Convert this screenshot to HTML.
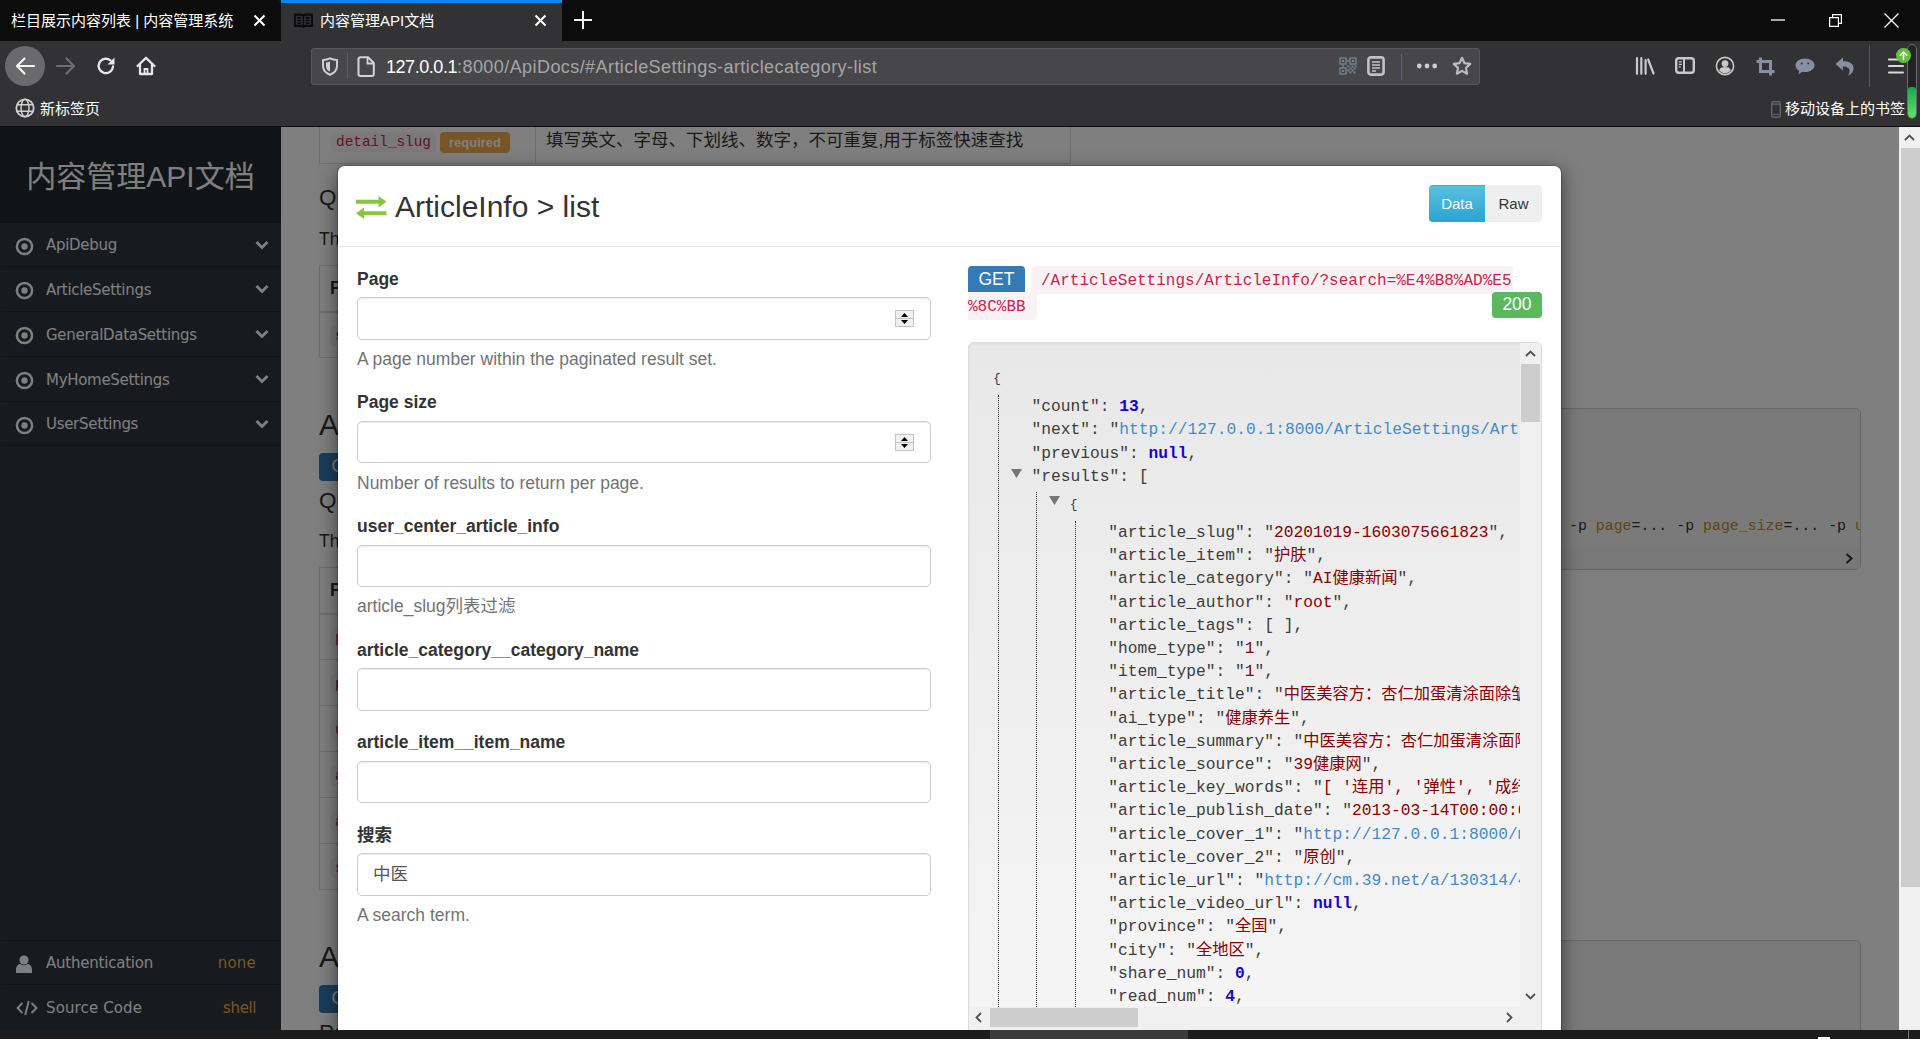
<!DOCTYPE html>
<html lang="zh-CN">
<head>
<meta charset="utf-8">
<title>内容管理API文档</title>
<style>
*{box-sizing:border-box;margin:0;padding:0}
html,body{width:1920px;height:1039px;overflow:hidden;background:#808080}
body{position:relative;font-family:"Liberation Sans","Noto Sans CJK SC",sans-serif;font-size:17.5px;color:#333;line-height:1.428571}
.abs{position:absolute}
svg{display:block;overflow:visible}
/* ---------- browser chrome ---------- */
#tabbar{position:absolute;left:0;top:0;width:1920px;height:41px;background:#0c0c0d}
#navbar{position:absolute;left:0;top:41px;width:1920px;height:85px;background:#323234}
#chromeline{position:absolute;left:0;top:126px;width:1920px;height:1px;background:#0c0c0d}
.tab{position:absolute;top:0;height:41px;color:#fff;font-size:15px;line-height:41px;white-space:nowrap;font-family:"Liberation Sans","Noto Sans CJK SC",sans-serif}
#tab2{left:281px;width:281px;background:#323234;border-top:3px solid #0a84ff;line-height:35px}
#urlbar{position:absolute;left:311px;top:48px;width:1169px;height:37px;background:#474749;border:1px solid #58585a;border-radius:3px}
#urltext{position:absolute;left:386px;top:54px;font-size:18px;line-height:26px;color:#a5a5a6;white-space:nowrap;letter-spacing:.43px}
#urltext b{font-weight:normal;color:#fff;letter-spacing:-.45px}
.bm{position:absolute;top:98px;font-size:15px;line-height:22px;color:#fff;white-space:nowrap}
/* ---------- page ---------- */
#page{position:absolute;left:0;top:127px;width:1920px;height:903px;overflow:hidden;background:#808080}

/* sidebar */
#sidebar{position:absolute;left:0;top:0;width:281px;height:903px;background:#2e353d;font-family:"DejaVu Sans","Noto Sans CJK SC",sans-serif;font-size:15px;color:#fff}
#brand{position:absolute;left:0;top:0;width:281px;height:96px;background:#23282e;text-align:center;font-family:"Liberation Sans","Noto Sans CJK SC",sans-serif;font-size:30px;line-height:33px;padding-top:33px;color:#fff;white-space:nowrap}
.mi{position:absolute;left:0;width:281px;height:45px;border-bottom:1px solid #23282e;border-left:4px solid #2e353d;line-height:44px;white-space:nowrap}
.mi span.t{position:absolute;left:42px;top:1px;letter-spacing:-0.3px}
.mi span.r{position:absolute;right:25px;top:1px;color:#f0ad4e}
.mi svg{position:absolute}

/* main content behind the modal */
#main{position:absolute;left:281px;top:0;width:1618px;height:903px;background:#fff;overflow:hidden}
#main .h3{position:absolute;left:38px;font-size:30px;line-height:33px;color:#333;white-space:nowrap}
#main .h4{position:absolute;left:38px;font-size:22.5px;line-height:25px;color:#333;white-space:nowrap}
#main .p{position:absolute;left:38px;font-size:17.5px;line-height:25px;white-space:nowrap}
#main .get{position:absolute;left:38px;width:62px;margin-top:-1px;height:28px;border-radius:4px;background:#337ab7;color:#fff;font-size:18px;line-height:27px;text-align:center}
table.t{position:absolute;left:38px;width:752px;border-collapse:collapse;font-size:17.5px}
table.t td,table.t th{border:1px solid #ddd;height:46px;padding:0 10px;text-align:left;vertical-align:middle;white-space:nowrap}
table.t th{font-weight:bold;border-bottom-width:2px}
table.t td:first-child,table.t th:first-child{width:216px}
code{font-family:"Liberation Mono",monospace;font-size:14.400px;color:#c7254e;background:#f9f2f4;border-radius:5px;padding:2px 5px}
.req{position:relative;top:2px;display:inline-block;background:#f0ad4e;color:#fff;font-weight:bold;font-size:13px;line-height:21px;height:21px;padding:0 9px;border-radius:4px;margin-left:4px;vertical-align:1px}
.pre{position:absolute;left:809px;width:771px;background:#f5f5f5;border:1px solid #ccc;border-radius:5px;overflow:hidden;font-family:"Liberation Mono",monospace;font-size:14.900px;color:#333;white-space:pre}

/* modal */
#modal{position:absolute;left:337px;top:38px;width:1225px;height:900px;background:#fff;border:1px solid rgba(0,0,0,.2);border-radius:7.5px;box-shadow:0 6px 19px rgba(0,0,0,.5);background-clip:padding-box}
#mhead{position:absolute;left:-1px;top:0;width:1222px;height:81px;border-bottom:1px solid #e5e5e5}
#mtitle{position:absolute;left:57px;top:24px;font-size:30px;line-height:33px;color:#333;white-space:nowrap}
.btn{position:absolute;top:19px;height:37px;line-height:37px;font-size:15px;text-align:center;width:56.5px}
#bdata{left:1091px;width:56px;background:linear-gradient(#5bc0de,#2aa5cf);color:#fff;border-radius:4px 0 0 4px;box-shadow:inset 0 1px 0 rgba(0,0,0,.12)}
#braw{left:1147px;width:57px;background:#efefef;color:#333;border-radius:0 4px 4px 0}
#form{position:absolute;left:18px;top:99.750px;width:574px}
#form label{display:block;position:relative;top:1px;font-weight:bold;font-size:17.5px;line-height:25px;margin-bottom:6.250px;color:#333;white-space:nowrap}
#form .inp{position:relative;height:42.500px;border:1px solid #ccc;border-radius:5px;box-shadow:inset 0 1px 1px rgba(0,0,0,.075);background:#fff;font-size:17.5px;line-height:40px;padding-left:15px;color:#555}
#form .help{position:relative;top:1px;font-size:17.5px;line-height:25px;color:#737373;margin-top:6.250px;white-space:nowrap}
#form .fg{margin-bottom:18.750px}
.spin{position:absolute;right:16px;top:12px;width:19px;height:17px;border:1px solid #c4c4c4;background:#f0f0f0}
.spin:before{content:"";position:absolute;left:0;right:0;top:7px;height:1px;background:#c4c4c4}
.spin svg{position:absolute;left:5px;top:2px}
#glabel{position:absolute;left:629px;top:100px;width:57px;height:26px;border-radius:4px 4px 0 0;background:#337ab7;color:#fff;font-size:17.5px;line-height:27px;text-align:center}
.ucode{position:absolute;font-family:"Liberation Mono",monospace;font-size:16px;color:#c7254e;background:#f9f2f4;white-space:nowrap;height:26.500px;line-height:26px}
#slabel{position:absolute;left:1153px;top:126px;width:50px;height:26px;border-radius:4px;background:#5cb85c;color:#fff;font-size:17.5px;line-height:25px;text-align:center}
#resp{position:absolute;left:629px;top:176px;width:574px;height:740px;border:1px solid #dcdcdc;border-radius:5px;background:linear-gradient(#e8e8e8,#f5f5f5 664px);overflow:hidden;box-shadow:inset 0 1px 3px rgba(0,0,0,.05)}
#json{position:absolute;left:24px;top:23.200px;font-family:"Liberation Mono","Noto Sans CJK SC",monospace;font-size:16.25px;line-height:23.200px;color:#3c3c3c;white-space:nowrap}
#json ul{list-style:none;padding-left:32.500px;border-left:1px dotted #333;margin:4.875px}
#json ul ul{margin-top:4.375px}
#json li{position:relative}
#json .b{font-size:13px}
#json .num{font-weight:bold;color:#1a01cc}
#json .str{color:#800}
#json a{color:#428bca;text-decoration:none}
#json .col{position:absolute;left:-20.600px;top:4px;width:11px;height:9px}
#rv{position:absolute;right:0;top:0;width:21px;height:664px;background:#f0f0f0}
#rh{position:absolute;left:0;top:664px;width:573px;height:24px;background:#f0f0f0}
.thumb{position:absolute;background:#cdcdcd}
#backdrop{position:absolute;left:0;top:0;width:1899px;height:903px;background:rgba(0,0,0,.5)}
#vscroll{position:absolute;left:1899px;top:0;width:21px;height:903px;background:#f0f0f0}
#bottombar{position:absolute;left:0;top:1030px;width:1920px;height:9px;background:#1c1c1c}
.pre i{font-style:normal;color:#c08a1a}
</style>
</head>
<body>
<div id="tabbar">
  <div class="tab" id="tab1" style="left:0;width:281px"><span class="abs" style="left:11px;top:0">栏目展示内容列表 | 内容管理系统</span>
    <svg class="abs" style="left:253px;top:14px" width="13" height="13" viewBox="0 0 13 13"><path d="M1.5 1.5L11.5 11.5M11.5 1.5L1.5 11.5" stroke="#fff" stroke-width="2" fill="none"/></svg>
  </div>
  <div class="tab" id="tab2">
    <svg class="abs" style="left:13px;top:10px" width="19" height="15" viewBox="0 0 20 14" preserveAspectRatio="none"><path d="M1 1.5h7.2l1.8 1 1.8-1H19v10.5h-7.2l-1.8 1-1.8-1H1z" fill="none" stroke="#0a0a0b" stroke-width="1.900"/><path d="M10 2.5v10M3.5 4.5h4M3.5 7h4M3.5 9.5h4M12.5 4.5h4M12.5 7h4M12.5 9.5h4" stroke="#0a0a0b" stroke-width="1.500" fill="none"/></svg>
    <span class="abs" style="left:39px;top:0">内容管理API文档</span>
    <svg class="abs" style="left:253px;top:11px" width="13" height="13" viewBox="0 0 13 13"><path d="M1.5 1.5L11.5 11.5M11.5 1.5L1.5 11.5" stroke="#fff" stroke-width="2" fill="none"/></svg>
  </div>
  <svg class="abs" style="left:574px;top:11px" width="18" height="18" viewBox="0 0 18 18"><path d="M9 0v18M0 9h18" stroke="#f0f0f0" stroke-width="2" fill="none"/></svg>
  <!-- window controls -->
  <svg class="abs" style="left:1771px;top:19px" width="14" height="2" viewBox="0 0 14 2"><path d="M0 1h14" stroke="#fff" stroke-width="1.3"/></svg>
  <svg class="abs" style="left:1829px;top:14px" width="13" height="13" viewBox="0 0 13 13"><path d="M0.6 3.6h8.8v8.8h-8.8zM3.6 3.6v-3h8.8v8.8h-3" stroke="#fff" stroke-width="1.2" fill="none"/></svg>
  <svg class="abs" style="left:1884px;top:13px" width="15" height="15" viewBox="0 0 15 15"><path d="M0.5 0.5L14.5 14.5M14.5 0.5L0.5 14.5" stroke="#fff" stroke-width="1.3" fill="none"/></svg>
</div>
<div id="navbar"></div>
<div id="chromeline"></div>
<!-- nav buttons -->
<div class="abs" style="left:5px;top:46px;width:40px;height:40px;border-radius:50%;background:#6a6a6c"></div>
<svg class="abs" style="left:15px;top:57px" width="20" height="18" viewBox="0 0 20 18"><path d="M19 9H2.5M9.5 1.5L2 9l7.5 7.5" stroke="#f3f3f3" stroke-width="2.2" fill="none" stroke-linecap="round" stroke-linejoin="round"/></svg>
<svg class="abs" style="left:56px;top:57px" width="20" height="18" viewBox="0 0 20 18"><path d="M1 9h16.5M10.500 1.500L18 9l-7.500 7.500" stroke="#6d6d6f" stroke-width="2.2" fill="none" stroke-linecap="round" stroke-linejoin="round"/></svg>
<svg class="abs" style="left:96px;top:56px" width="20" height="20" viewBox="0 0 20 20"><path d="M17 10.500a7.200 7.200 0 1 1-2.600-6.100" stroke="#e6e6e6" stroke-width="2.300" fill="none" stroke-linecap="round"/><path d="M18.500 1.500v7h-7z" fill="#e6e6e6"/></svg>
<svg class="abs" style="left:136px;top:56px" width="20" height="20" viewBox="0 0 20 20"><path d="M1.500 10L10 1.800 18.500 10M4 8.500V18h12V8.500" stroke="#e6e6e6" stroke-width="2.300" fill="none" stroke-linecap="round" stroke-linejoin="round"/><path d="M8.500 18v-5h3v5" stroke="#e6e6e6" stroke-width="1.800" fill="none"/></svg>
<div id="urlbar"></div>
<!-- shield -->
<svg class="abs" style="left:321px;top:57px" width="18" height="19" viewBox="0 0 18 19"><path d="M9 1.300C7 2.300 4.500 2.900 2 3V9c0 4.200 2.800 7 7 8.700 4.200-1.700 7-4.500 7-8.700V3c-2.500-.100-5-.700-7-1.700z" stroke="#cfcfd0" stroke-width="2" fill="none" stroke-linejoin="round"/><path d="M9 4.500c-1.300.600-2.700.900-4 1V9.200c0 2.500 1.500 4.200 4 5.400z" fill="#cfcfd0"/></svg>
<div class="abs" style="left:347px;top:53px;width:1px;height:26px;background:#5f5f61"></div>
<svg class="abs" style="left:357px;top:56px" width="18" height="21" viewBox="0 0 18 21"><path d="M3.500 1.200h7.500l5.800 5.800v11a2 2 0 0 1-2 2H3.500a2 2 0 0 1-2-2V3.200a2 2 0 0 1 2-2z" stroke="#d4d4d5" stroke-width="2" fill="none" stroke-linejoin="round"/><path d="M10.500 1.500V7.500h6" stroke="#d4d4d5" stroke-width="1.800" fill="none"/></svg>
<div id="urltext"><b>127.0.0.1</b>:8000/ApiDocs/#ArticleSettings-articlecategory-list</div>

<!-- urlbar right icons -->
<svg class="abs" style="left:1339px;top:57px" width="18" height="18" viewBox="0 0 18 18" fill="none" stroke="#74828f"><rect x="1" y="1" width="6" height="6" stroke-width="1.400"/><rect x="11" y="1" width="6" height="6" stroke-width="1.400"/><rect x="1" y="11" width="6" height="6" stroke-width="1.400"/><path d="M3 3h2v2H3zM13 3h2v2h-2zM3 13h2v2H3z" fill="#74828f" stroke="none"/><path d="M7.500 4h3M4 7.500v3" stroke-width="1.400"/><path d="M8.500 8.500h2v2h-2zM10.500 10.500h2v2h-2zM12.500 8.500h2v2h-2zM14.500 10.500h2v2h-2zM10.500 14.500h2v2h-2zM14.500 14.500h2v2h-2zM8.500 12.500h2v2h-2zM12.500 12.500h2v2h-2zM16 8.500h1.500v2H16z" fill="#74828f" stroke="none"/></svg>
<svg class="abs" style="left:1367px;top:56px" width="18" height="20" viewBox="0 0 18 20"><rect x="1.400" y="1.400" width="15.200" height="17.200" rx="2.500" fill="none" stroke="#c2c2c3" stroke-width="2.600"/><path d="M5 6h8M5 9h8M5 12h8M5 15h4" stroke="#c2c2c3" stroke-width="1.300"/></svg>
<div class="abs" style="left:1401px;top:54px;width:1px;height:26px;background:#5d6880"></div>
<svg class="abs" style="left:1416px;top:63px" width="22" height="6" viewBox="0 0 22 6"><circle cx="3.300" cy="3" r="2.400" fill="#cdcdce"/><circle cx="11" cy="3" r="2.400" fill="#cdcdce"/><circle cx="18.700" cy="3" r="2.400" fill="#cdcdce"/></svg>
<svg class="abs" style="left:1452px;top:56px" width="20" height="20" viewBox="0 0 20 20"><path d="M10 1.800l2.500 5.400 5.800.700-4.300 4 1.100 5.800L10 14.900l-5.100 2.800 1.100-5.800-4.300-4 5.800-.700z" fill="none" stroke="#bcbcbd" stroke-width="2.200" stroke-linejoin="round"/></svg>
<!-- toolbar right icons -->
<svg class="abs" style="left:1635px;top:57px" width="20" height="18" viewBox="0 0 20 18"><path d="M2 1.200v15.600M6.300 1.200v15.600M10.600 3v13.800" stroke="#c8c8c9" stroke-width="2.200" stroke-linecap="round" fill="none"/><path d="M13.200 2.500L18.500 16.500" stroke="#c8c8c9" stroke-width="2.200" stroke-linecap="round" fill="none"/></svg>
<svg class="abs" style="left:1675px;top:57px" width="20" height="17" viewBox="0 0 20 17"><rect x="1.200" y="1.200" width="17.600" height="14.600" rx="2.500" fill="none" stroke="#c8c8c9" stroke-width="2.400"/><path d="M9 1.500v14" stroke="#c8c8c9" stroke-width="2"/><path d="M3.800 4.800h3M3.800 7.300h3M3.800 9.800h2" stroke="#c8c8c9" stroke-width="1.200"/></svg>
<svg class="abs" style="left:1715px;top:56px" width="20" height="20" viewBox="0 0 20 20"><circle cx="10" cy="10" r="8.600" fill="none" stroke="#c8c8c9" stroke-width="1.600"/><circle cx="10" cy="7.600" r="3.400" fill="#c8c8c9"/><path d="M4.200 14.200c1-2.600 3-3.200 5.800-3.200s4.800.600 5.800 3.200c-1.400 2-3.400 3-5.800 3s-4.400-1-5.800-3z" fill="#c8c8c9"/></svg>
<svg class="abs" style="left:1756px;top:57px" width="19" height="19" viewBox="0 0 19 19"><path d="M4.500 0.500v14h14M0.500 4.500h14v14" stroke="#8590a2" stroke-width="3" fill="none"/></svg>
<svg class="abs" style="left:1795px;top:58px" width="20" height="17" viewBox="0 0 20 17"><path d="M10 0.500c5.300 0 9.500 3 9.500 6.800s-4.200 6.800-9.500 6.800c-1 0-2-.100-2.900-.300L3.500 16.400l.600-3.700C1.800 11.500.500 9.600.500 7.300.500 3.500 4.700.500 10 .500z" fill="#8590a2"/><circle cx="6.800" cy="5.500" r="1" fill="#323234"/><circle cx="13.200" cy="5.500" r="1" fill="#323234"/></svg>
<svg class="abs" style="left:1835px;top:57px" width="19" height="19" viewBox="0 0 19 19"><path d="M8 0.500L0.500 7 8 13.500V9.500c4.500 0 7 1.500 6.500 5.500-.200 1.500-1 2.700-2 3.500 4-1 6-4 6-7.500 0-4.500-4-6.800-10.500-6.800z" fill="#8590a2"/></svg>
<div class="abs" style="left:1869px;top:45px;width:1px;height:42px;background:#58585a"></div>
<svg class="abs" style="left:1888px;top:58px" width="16" height="16" viewBox="0 0 16 16"><path d="M1 1.500h14M1 8h14M1 14.500h14" stroke="#d8d8d9" stroke-width="2.200" stroke-linecap="round"/></svg>
<div class="abs" style="left:1907px;top:44px;width:10px;height:75px;border-radius:5px;border:1px solid #6a6a6c;background:#232325;overflow:hidden"><div style="position:absolute;left:0;right:0;top:42px;bottom:0;background:linear-gradient(#17a84e,#66e166);border-radius:3px 3px 4px 4px"></div></div>
<div class="abs" style="left:1896px;top:48px;width:15px;height:15px;border-radius:50%;background:#65c13c"></div>
<svg class="abs" style="left:1899px;top:51px" width="9" height="9" viewBox="0 0 9 9"><path d="M4.500 8.500V1.500M1.200 4.300L4.500 1l3.300 3.300" stroke="#fff" stroke-width="1.500" fill="none" stroke-linecap="round" stroke-linejoin="round"/></svg>
<!-- bookmarks bar -->
<svg class="abs" style="left:15px;top:98px" width="20" height="20" viewBox="0 0 20 20" fill="none" stroke="#cfcfd0"><circle cx="10" cy="10" r="8.700" stroke-width="1.800"/><ellipse cx="10" cy="10" rx="4" ry="8.700" stroke-width="1.500"/><path d="M2 6.800h16M2 13.200h16" stroke-width="1.500"/></svg>
<div class="bm" style="left:40px">新标签页</div>
<svg class="abs" style="left:1771px;top:101px" width="10" height="17" viewBox="0 0 10 17"><rect x=".700" y=".700" width="8.600" height="15.600" rx="1.500" fill="none" stroke="#5b6674" stroke-width="1.400"/><path d="M1 3.200h8M1 13.500h8" stroke="#5b6674" stroke-width="1.200"/></svg>
<div class="bm" style="left:1785px">移动设备上的书签</div>
<!-- PAGE -->
<div id="page">
<div id="sidebar">
<div id="brand">内容管理API文档</div>
<div class="mi" style="top:96px;height:44px;line-height:43px"><svg style="left:11px;top:13.500px" width="19" height="19" viewBox="0 0 19 19"><circle cx="9.500" cy="9.500" r="7.600" fill="none" stroke="#fff" stroke-width="2.500"/><circle cx="9.500" cy="9.500" r="3.200" fill="#fff"/></svg><span class="t">ApiDebug</span><svg style="left:251px;top:17px" width="14" height="10" viewBox="0 0 14 10"><path d="M1.500 2L7 7.500 12.500 2" stroke="#fff" stroke-width="2.800" fill="none"/></svg></div>
<div class="mi" style="top:140px"><svg style="left:11px;top:13.500px" width="19" height="19" viewBox="0 0 19 19"><circle cx="9.500" cy="9.500" r="7.600" fill="none" stroke="#fff" stroke-width="2.500"/><circle cx="9.500" cy="9.500" r="3.200" fill="#fff"/></svg><span class="t">ArticleSettings</span><svg style="left:251px;top:17px" width="14" height="10" viewBox="0 0 14 10"><path d="M1.500 2L7 7.500 12.500 2" stroke="#fff" stroke-width="2.800" fill="none"/></svg></div>
<div class="mi" style="top:185px"><svg style="left:11px;top:13.500px" width="19" height="19" viewBox="0 0 19 19"><circle cx="9.500" cy="9.500" r="7.600" fill="none" stroke="#fff" stroke-width="2.500"/><circle cx="9.500" cy="9.500" r="3.200" fill="#fff"/></svg><span class="t">GeneralDataSettings</span><svg style="left:251px;top:17px" width="14" height="10" viewBox="0 0 14 10"><path d="M1.500 2L7 7.500 12.500 2" stroke="#fff" stroke-width="2.800" fill="none"/></svg></div>
<div class="mi" style="top:230px"><svg style="left:11px;top:13.500px" width="19" height="19" viewBox="0 0 19 19"><circle cx="9.500" cy="9.500" r="7.600" fill="none" stroke="#fff" stroke-width="2.500"/><circle cx="9.500" cy="9.500" r="3.200" fill="#fff"/></svg><span class="t">MyHomeSettings</span><svg style="left:251px;top:17px" width="14" height="10" viewBox="0 0 14 10"><path d="M1.500 2L7 7.500 12.500 2" stroke="#fff" stroke-width="2.800" fill="none"/></svg></div>
<div class="mi" style="top:275px;height:44px;line-height:43px"><svg style="left:11px;top:13.500px" width="19" height="19" viewBox="0 0 19 19"><circle cx="9.500" cy="9.500" r="7.600" fill="none" stroke="#fff" stroke-width="2.500"/><circle cx="9.500" cy="9.500" r="3.200" fill="#fff"/></svg><span class="t">UserSettings</span><svg style="left:251px;top:17px" width="14" height="10" viewBox="0 0 14 10"><path d="M1.500 2L7 7.500 12.500 2" stroke="#fff" stroke-width="2.800" fill="none"/></svg></div>
<div class="mi" style="top:813px;height:45px;border-top:1px solid #23282e"><svg style="left:11px;top:14px" width="18" height="18" viewBox="0 0 18 18"><circle cx="9" cy="5" r="4.600" fill="#fff"/><path d="M1 18v-3.500c0-3.500 2.500-5.500 4.500-5.500 1 .800 2.200 1.200 3.500 1.200s2.500-.400 3.500-1.200c2 0 4.500 2 4.500 5.500V18z" fill="#fff"/></svg><span class="t" style="top:0;letter-spacing:-.22px">Authentication</span><span class="r" style="top:0;letter-spacing:.2px">none</span></div>
<div class="mi" style="top:858px;height:45px;border-bottom:0"><svg style="left:12px;top:15px" width="22" height="16" viewBox="0 0 22 16"><path d="M6.500 3L1.500 8l5 5M15.500 3l5 5-5 5M12.800 1L9.200 15" stroke="#fff" stroke-width="1.900" fill="none"/></svg><span class="t" style="letter-spacing:.12px">Source Code</span><span class="r" style="letter-spacing:-.4px">shell</span></div>
</div>
<div id="main">
<table class="t" style="top:-10px"><tr><td style="padding-left:11px"><code>detail_slug</code><span class="req">required</span></td><td>填写英文、字母、下划线、数字，不可重复,用于标签快速查找</td></tr></table>
<div class="h4" style="top:58px">Query Parameters</div>
<div class="p" style="top:100px">The following parameters should be included as part of a URL query string.</div>
<table class="t" style="top:138px"><tr><th>Parameter</th><th>Description</th></tr><tr><td><code>search</code></td><td>A search term.</td></tr></table>
<div class="h3" style="top:281px">ArticleInfo &gt; list</div>
<div class="get" style="top:327px">GET</div>
<div class="h4" style="top:361px">Query Parameters</div>
<div class="p" style="top:402px">The following parameters should be included as part of a URL query string.</div>
<table class="t" style="top:440px"><tr><th>Parameter</th><th>Description</th></tr><tr><td><code>page</code></td><td></td></tr><tr><td><code>page_size</code></td><td></td></tr><tr><td><code>user_center_article_info</code></td><td></td></tr><tr><td><code>article_category__category_name</code></td><td></td></tr><tr><td><code>article_item__item_name</code></td><td></td></tr><tr><td><code>search</code></td><td></td></tr></table>
<div class="h3" style="top:813px">ArticleInfo &gt; read</div>
<div class="get" style="top:859px">GET</div>
<div class="h4" style="top:893px">Path Parameters</div>
<div class="pre" style="top:281px;height:162px"><span class="abs" style="right:301px;top:107px">$ coreapi action ArticleSettings ArticleInfo list</span><span class="abs" style="left:478px;top:107px">-p <i>page</i>=... -p <i>page_size</i>=... -p <i>user_center_article_info</i>=...</span>
<div class="abs" style="left:0;right:0;bottom:0;height:21px;background:#f0f0f0"><svg class="abs" style="right:7px;top:5px" width="8" height="11" viewBox="0 0 8 11"><path d="M1.500 1L6.500 5.500 1.500 10" stroke="#333" stroke-width="2" fill="none"/></svg></div></div>
<div class="pre" style="top:813px;height:163px"></div>
</div>
<div id="backdrop"></div>
<div id="vscroll"><svg class="abs" style="left:5px;top:7px" width="11" height="7" viewBox="0 0 11 7"><path d="M1 6L5.500 1.500 10 6" stroke="#505050" stroke-width="1.800" fill="none"/></svg><div class="thumb" style="left:2px;top:21px;width:19px;height:739px"></div></div>
<div id="modal"><div class="abs" style="left:1px;top:0px;width:1220px;height:900px">
<div id="mhead">
<svg class="abs" style="left:18px;top:30px" width="31" height="23" viewBox="0 0 31 23"><path d="M0 7.800h22.500V11.500L30.500 5.800 22.500 0V3.800H0zM30.500 15.200H8V11.500L0 17.200 8 23v-3.800h22.500z" fill="#8bc441"/></svg>
<div id="mtitle">ArticleInfo &gt; list</div>
<div class="btn" id="bdata">Data</div><div class="btn" id="braw">Raw</div>
</div>
<div id="form">
<div class="fg"><label>Page</label><div class="inp"><span class="spin"><svg width="7" height="11" viewBox="0 0 7 11"><path d="M3.500 0L7 4H0zM3.500 11L7 7H0z" fill="#000"/></svg></span></div><div class="help">A page number within the paginated result set.</div></div>
<div class="fg"><label style="top:0">Page size</label><div class="inp"><span class="spin"><svg width="7" height="11" viewBox="0 0 7 11"><path d="M3.500 0L7 4H0zM3.500 11L7 7H0z" fill="#000"/></svg></span></div><div class="help">Number of results to return per page.</div></div>
<div class="fg"><label>user_center_article_info</label><div class="inp"></div><div class="help">article_slug列表过滤</div></div>
<div class="fg"><label>article_category__category_name</label><div class="inp"></div></div>
<div class="fg"><label style="top:0">article_item__item_name</label><div class="inp"></div></div>
<div class="fg"><label>搜索</label><div class="inp">中医</div><div class="help">A search term.</div></div>
</div>
<div id="glabel">GET</div>
<div class="ucode" style="left:692px;top:100px;width:482px;height:27.500px;line-height:30px;padding-left:10px;border-radius:5px 0 0 0">/ArticleSettings/ArticleInfo/?search=%E4%B8%AD%E5</div>
<div class="ucode" style="left:629px;top:126px;width:69px;height:27.500px;line-height:30px;border-radius:0 0 5px 0">%8C%BB</div>
<div id="slabel">200</div>
<div id="resp"><div id="json"><span class="b">{</span><ul>
<li>"count": <span class="num">13</span>,</li>
<li>"next": "<a>http://127.0.0.1:8000/ArticleSettings/ArticleInfo/?page=2&amp;search=%E4%B8%AD%E5%8C%BB</a>",</li>
<li>"previous": <span class="num">null</span>,</li>
<li><svg class="col" viewBox="0 0 11 9"><path d="M0 0h11L5.500 9z" fill="#777"/></svg>"results": [<ul><li><svg class="col" viewBox="0 0 11 9"><path d="M0 0h11L5.500 9z" fill="#777"/></svg><span class="b">{</span><ul><li>"article_slug": "<span class="str">20201019-1603075661823</span>",</li><li>"article_item": "<span class="str">护肤</span>",</li><li>"article_category": "<span class="str">AI健康新闻</span>",</li><li>"article_author": "<span class="str">root</span>",</li><li>"article_tags": [ ],</li><li>"home_type": "<span class="str">1</span>",</li><li>"item_type": "<span class="str">1</span>",</li><li>"article_title": "<span class="str">中医美容方：杏仁加蛋清涂面除皱纹 让肌肤恢复弹性</span>",</li><li>"ai_type": "<span class="str">健康养生</span>",</li><li>"article_summary": "<span class="str">中医美容方：杏仁加蛋清涂面除皱纹，连用一个月可见效</span>",</li><li>"article_source": "<span class="str">39健康网</span>",</li><li>"article_key_words": "<span class="str">[ '连用', '弹性', '成纤维细胞', '杏仁', '蛋清' ]</span>",</li><li>"article_publish_date": "<span class="str">2013-03-14T00:00:00</span>",</li><li>"article_cover_1": "<a>http://127.0.0.1:8000/media/article/cover/20201019.jpg</a>",</li><li>"article_cover_2": "<span class="str">原创</span>",</li><li>"article_url": "<a>http://cm.39.net/a/130314/4139712.html</a>",</li><li>"article_video_url": <span class="num">null</span>,</li><li>"province": "<span class="str">全国</span>",</li><li>"city": "<span class="str">全地区</span>",</li><li>"share_num": <span class="num">0</span>,</li><li>"read_num": <span class="num">4</span>,</li><li>"like_num": <span class="num">0</span>,</li><li>"comment_num": <span class="num">0</span>,</li></ul></li></ul></li>
</ul></div>
<div id="rv"><svg class="abs" style="left:5px;top:7px" width="11" height="7" viewBox="0 0 11 7"><path d="M1 6L5.500 1.500 10 6" stroke="#505050" stroke-width="1.800" fill="none"/></svg><div class="thumb" style="left:1px;top:21px;width:19px;height:58px"></div><svg class="abs" style="left:5px;top:650px" width="11" height="7" viewBox="0 0 11 7"><path d="M1 1L5.500 5.500 10 1" stroke="#505050" stroke-width="1.800" fill="none"/></svg></div>
<div id="rh"><svg class="abs" style="left:6px;top:5px" width="7" height="11" viewBox="0 0 7 11"><path d="M6 1L1.500 5.500 6 10" stroke="#505050" stroke-width="1.800" fill="none"/></svg><div class="thumb" style="left:21px;top:1px;width:148px;height:19px"></div><svg class="abs" style="left:537px;top:5px" width="7" height="11" viewBox="0 0 7 11"><path d="M1 1L5.500 5.500 1 10" stroke="#505050" stroke-width="1.800" fill="none"/></svg></div>
</div>
</div></div>
</div>
<div id="bottombar"><div class="abs" style="left:990px;top:0;width:198px;height:10px;background:#3b3b3b"></div><div class="abs" style="left:1818px;top:7px;width:12px;height:2px;background:#fff"></div><div class="abs" style="left:1908px;top:0;width:1px;height:10px;background:#777"></div></div>
</body>
</html>
